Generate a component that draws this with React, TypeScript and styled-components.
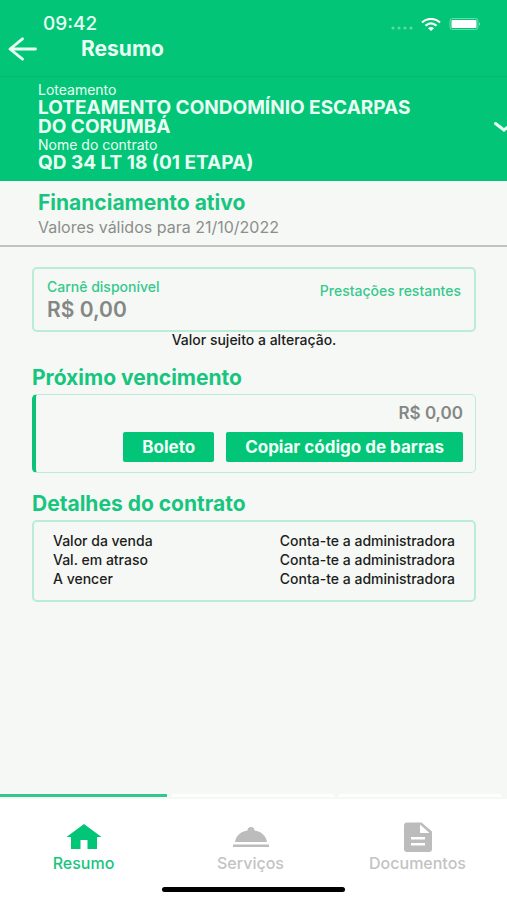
import React from "react";
import styled, { createGlobalStyle } from "styled-components";

const GlobalStyle = createGlobalStyle`
  * { box-sizing: border-box; }
  body { margin: 0; background: #f5f8f5; font-family: Inter, "Liberation Sans", sans-serif; }
  h1, h2, p { margin: 0; }
  button { font-family: inherit; border: 0; cursor: pointer; }
`;

const green = "#03c577";
const textGreen = "#17c57e";
const softGreen = "#bbecd8";

const Screen = styled.div`
  min-height: 100vh;
  display: flex;
  flex-direction: column;
  overflow-x: hidden;
`;

const TopBar = styled.header`
  background: ${green};
  color: #e9fff4;
  border-bottom: 1px solid #0bb56f;
  padding: 14px 26px 15px 8px;
`;

const StatusRow = styled.div`
  display: flex;
  align-items: center;
  justify-content: space-between;
  height: 20px;
  padding-left: 35px;
`;

const Clock = styled.span`
  font-size: 19px;
  line-height: 20px;
  font-weight: 500;
`;

const StatusIcons = styled.div`
  display: flex;
  align-items: center;
  gap: 8px;
`;

const TitleRow = styled.div`
  display: flex;
  align-items: center;
  gap: 43px;
  height: 27px;
  padding-top: 3px;
`;

const BackButton = styled.button`
  display: flex;
  padding: 0;
  background: none;
  color: #e9fff4;
`;

const PageTitle = styled.h1`
  font-size: 21px;
  line-height: 24px;
  font-weight: 700;
`;

const ContractPicker = styled.button`
  display: flex;
  align-items: center;
  justify-content: space-between;
  width: 100%;
  padding: 4px 0 9px 38px;
  overflow: hidden;
  text-align: left;
  color: #e9fff4;
  background: ${green};
`;

const PickerText = styled.span`
  display: flex;
  flex-direction: column;
  flex: 0 1 400px;
`;

const PickerLabel = styled.span`
  font-size: 14px;
  line-height: 17px;
`;

const PickerValue = styled.span`
  font-size: 19px;
  line-height: 19px;
  font-weight: 700;
`;

const Chevron = styled.svg`
  flex: none;
  margin-right: -8px;
`;

const Summary = styled.section`
  padding: 10px 38px 6px;
  border-bottom: 2px solid #c0c2c0;
`;

const Heading = styled.h2`
  font-size: 21px;
  line-height: 24px;
  font-weight: 700;
  color: ${textGreen};
`;

const SummaryNote = styled.p`
  font-size: 16px;
  line-height: 24px;
  color: #8c8e8c;
`;

const Main = styled.main`
  flex: 1;
  padding: 20px 31px 24px 32px;
`;

const Card = styled.div`
  border: 2px solid ${softGreen};
  border-radius: 5px;
`;

const BalanceCard = styled(Card)`
  display: flex;
  justify-content: space-between;
  padding: 8px 13px 8px;
  font-size: 14px;
  line-height: 20px;
  font-weight: 500;
  color: #35c98d;
`;

const Balance = styled.p`
  font-size: 21px;
  line-height: 25px;
  font-weight: 600;
  color: #858785;
`;

const Remaining = styled.span`
  padding-top: 4px;
`;

const Notice = styled.p`
  font-size: 14px;
  line-height: 16px;
  margin-bottom: 18px;
  font-weight: 500;
  text-align: center;
  color: #1c1d1c;
`;

const Section = styled.section`
  & + & { margin-top: 19px; }
`;

const SectionCard = styled(Card)`
  margin-top: 4px;
`;

const DueCard = styled(SectionCard)`
  border-width: 1px 1px 1px 4px;
  border-left-color: #0cc279;
  padding: 8px 12px 10px;
`;

const DueAmount = styled.p`
  font-size: 17px;
  line-height: 20px;
  margin-bottom: 9px;
  font-weight: 600;
  text-align: right;
  color: #858785;
`;

const Actions = styled.div`
  display: flex;
  justify-content: flex-end;
  gap: 12px;
`;

const ActionButton = styled.button`
  height: 30px;
  padding: 0 19px;
  border-radius: 2px;
  background: ${green};
  color: #f0fff8;
  font-size: 17px;
  font-weight: 700;
`;

const DetailsCard = styled(SectionCard)`
  padding: 9px 19px 12px;
`;

const Details = styled.table`
  width: 100%;
  border-collapse: collapse;
  font-size: 14px;
  line-height: 19px;
  color: #1c1d1c;
  th, td { padding: 0; font-weight: 500; text-align: left; }
  td { text-align: right; }
`;

const TabArea = styled.footer`
  background: linear-gradient(#f5f8f5 5px, #fff 5px);
`;

const TabBar = styled.nav`
  display: grid;
  grid-template-columns: repeat(3, 1fr);
  padding-right: 6px;
`;

const Tab = styled.a<{ $active?: boolean }>`
  display: flex;
  flex-direction: column;
  align-items: center;
  color: ${(p) => (p.$active ? textGreen : "#c3c3c3")};
  font-size: 16px;
  line-height: 18px;
  font-weight: 500;
  text-decoration: none;
`;

const Indicator = styled.span<{ $active?: boolean }>`
  align-self: stretch;
  height: 3px;
  margin: 0 0 25px ${(p) => (p.$active ? 0 : 5)}px;
  background: ${(p) => (p.$active ? "#32c78c" : "#fdfefd")};
`;

const HomeBar = styled.div`
  width: 36%;
  height: 5px;
  margin: 15px auto 0;
  border-radius: 3px;
  background: #000;
`;

const TabFooter = styled.div`
  padding-bottom: 8px;
`;

const details = ["Valor da venda", "Val. em atraso", "A vencer"];

const HomeIcon = () => (
  <svg width="36" height="32" viewBox="0 0 36 32" fill={green} aria-hidden="true">
    <path d="M18 2 35.500 15H31v12H21.500v-9h-7v9H5V15H.5Z" />
  </svg>
);

const ServiceIcon = () => (
  <svg width="38" height="32" viewBox="0 0 38 32" fill="#bcbcbc" aria-hidden="true">
    <path d="M1 22.500h36v2.500H1ZM3 20C4 13.500 9 9.500 15.500 8.500a3.500 3.500 0 1 1 7 0C29 9.500 34 13.500 35 20Z" />
  </svg>
);

const DocumentIcon = () => (
  <svg width="30" height="32" viewBox="0 0 30 32" fill="#bcbcbc" aria-hidden="true">
    <path
      fillRule="evenodd"
      d="M4 .5h14.500L29 9.500V27a3 3 0 0 1-3 3H4a3 3 0 0 1-3-3V3.500a3 3 0 0 1 3-3ZM17 2.500V11h9.500ZM8 15v2.500h14V15ZM8 21v2.500h14V21Z"
    />
  </svg>
);

const tabs = [
  { label: "Resumo", icon: <HomeIcon /> },
  { label: "Serviços", icon: <ServiceIcon /> },
  { label: "Documentos", icon: <DocumentIcon /> },
];

export default function App() {
  return (
    <Screen>
      <GlobalStyle />
      <TopBar>
        <StatusRow>
          <Clock>09:42</Clock>
          <StatusIcons>
            <svg width="22" height="12" viewBox="0 0 22 12" fill="#fff" opacity=".35" aria-hidden="true">
              <circle cx="2" cy="10" r="1.600" />
              <circle cx="8" cy="10" r="1.600" />
              <circle cx="14" cy="10" r="1.600" />
              <circle cx="20" cy="10" r="1.600" />
            </svg>
            <svg width="20" height="13" viewBox="0 0 20 13" fill="none" stroke="#fff" strokeWidth="2.200" aria-hidden="true">
              <path d="M1 4.500C6-.2 14-.2 19 4.500M4.500 7.700c3.500-3 7.500-3 11 0" />
              <path d="M7 10.200c2-1.600 4-1.600 6 0L10 13Z" fill="#fff" stroke="none" />
            </svg>
            <svg width="32" height="14" viewBox="0 0 32 14" fill="none" aria-hidden="true">
              <rect x="1" y="1.500" width="28" height="11" rx="2.500" stroke="#fff" strokeOpacity=".4" />
              <rect x="2.500" y="3" width="25" height="8" rx="1" fill="#fff" />
              <path d="M30 5.500c1.500.5 1.500 2.500 0 3Z" fill="#fff" fillOpacity=".5" />
            </svg>
          </StatusIcons>
        </StatusRow>
        <TitleRow>
          <BackButton aria-label="Voltar">
            <svg width="30" height="24" viewBox="0 0 30 24" fill="none" stroke="currentColor" strokeWidth="2.800" strokeLinecap="round" strokeLinejoin="round">
              <path d="M14.500 1.800 2 12l12.500 10.200M2.500 12H27.500" />
            </svg>
          </BackButton>
          <PageTitle>Resumo</PageTitle>
        </TitleRow>
      </TopBar>
      <ContractPicker aria-haspopup="listbox" aria-expanded="false">
        <PickerText>
          <PickerLabel>Loteamento</PickerLabel>
          <PickerValue>LOTEAMENTO CONDOMÍNIO ESCARPAS DO CORUMBÁ</PickerValue>
          <PickerLabel>Nome do contrato</PickerLabel>
          <PickerValue>QD 34 LT 18 (01 ETAPA)</PickerValue>
        </PickerText>
        <Chevron width="22" height="12" viewBox="0 0 22 12" fill="none" stroke="currentColor" strokeWidth="3" strokeLinecap="round" aria-hidden="true">
          <path d="M2.500 2.500 11 9l8.500-6.500" />
        </Chevron>
      </ContractPicker>
      <Summary>
        <Heading>Financiamento ativo</Heading>
        <SummaryNote>Valores válidos para 21/10/2022</SummaryNote>
      </Summary>
      <Main>
        <BalanceCard>
          <div>
            <p>Carnê disponível</p>
            <Balance>R$ 0,00</Balance>
          </div>
          <Remaining>Prestações restantes</Remaining>
        </BalanceCard>
        <Notice>Valor sujeito a alteração.</Notice>
        <Section>
          <Heading>Próximo vencimento</Heading>
          <DueCard>
            <DueAmount>R$ 0,00</DueAmount>
            <Actions>
              <ActionButton>Boleto</ActionButton>
              <ActionButton>Copiar código de barras</ActionButton>
            </Actions>
          </DueCard>
        </Section>
        <Section>
          <Heading>Detalhes do contrato</Heading>
          <DetailsCard>
            <Details>
              <tbody>
                {details.map((label) => (
                  <tr key={label}>
                    <th scope="row">{label}</th>
                    <td>Conta-te a administradora</td>
                  </tr>
                ))}
              </tbody>
            </Details>
          </DetailsCard>
        </Section>
      </Main>
      <TabArea>
        <TabBar>
          {tabs.map((tab, i) => (
            <Tab key={tab.label} href="#" $active={i === 0} aria-current={i === 0 ? "page" : undefined}>
              <Indicator $active={i === 0} />
              {tab.icon}
              <span>{tab.label}</span>
            </Tab>
          ))}
        </TabBar>
        <TabFooter>
          <HomeBar />
        </TabFooter>
      </TabArea>
    </Screen>
  );
}
